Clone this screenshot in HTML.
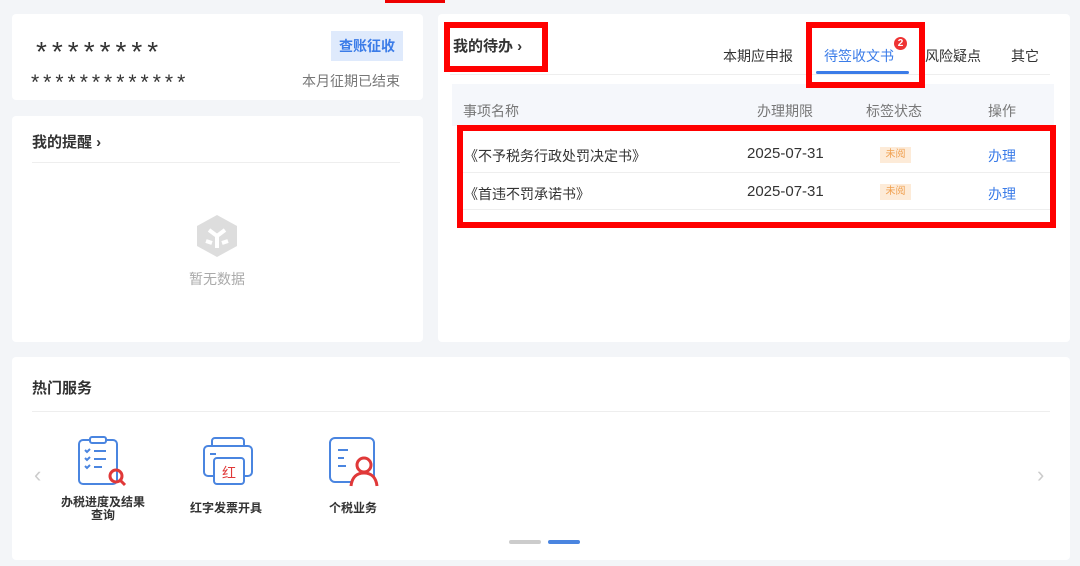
<!DOCTYPE html><html><head><meta charset="utf-8"><style>
*{margin:0;padding:0;box-sizing:border-box}
body{width:1080px;height:566px;background:#f3f5f8;font-family:"Liberation Sans","Noto Sans CJK SC",sans-serif;position:relative;overflow:hidden;color:#333}
.a{position:absolute}
.card{position:absolute;background:#fff;border-radius:4px}
.rb{position:absolute;border:6px solid #f00}
.t{font-size:14px;white-space:nowrap}
</style></head><body>
<div class="a" style="left:385px;top:0;width:60px;height:3px;background:#e00"></div>
<div class="card" style="left:12px;top:14px;width:411px;height:86px"></div>
<div class="a t" style="left:36px;top:36px;font-size:28px;letter-spacing:5px">********</div>
<div class="a t" style="left:31px;top:71px;font-size:21px;letter-spacing:4px">*************</div>
<div class="a" style="left:331px;top:31px;width:72px;height:30px;background:#dfeafc;color:#3b7ce8;font-weight:bold;font-size:14px;text-align:center;line-height:30px">查账征收</div>
<div class="a t" style="left:302px;top:71px;color:#777">本月征期已结束</div>

<div class="card" style="left:12px;top:116px;width:411px;height:226px"></div>
<div class="a t" style="left:32px;top:131px;font-weight:bold;font-size:15px">我的提醒 ›</div>
<div class="a" style="left:32px;top:162px;width:368px;height:1px;background:#eee"></div>
<svg class="a" style="left:194px;top:213px" width="46" height="46" viewBox="0 0 46 46"><path d="M23 2 L43 13 V33 L23 44 L3 33 V13Z" fill="#ddd"/><path d="M15 17l8 6 8-6M23 23v12M12 28l6 2M34 28l-6 2" stroke="#fff" stroke-width="4" fill="none"/></svg>
<div class="a t" style="left:189px;top:269px;color:#aaa">暂无数据</div>

<div class="card" style="left:438px;top:14px;width:632px;height:328px"></div>
<div class="a t" style="left:453px;top:35px;font-weight:bold;font-size:15px">我的待办 ›</div>
<div class="a" style="left:450px;top:74px;width:600px;height:1px;background:#eee"></div>
<div class="a t" style="left:723px;top:46px">本期应申报</div>
<div class="a t" style="left:824px;top:46px;color:#3b7ce8">待签收文书</div>
<div class="a" style="left:894px;top:37px;width:13px;height:13px;border-radius:50%;background:#e33;color:#fff;font-size:10px;text-align:center;line-height:13px;font-weight:bold">2</div>
<div class="a t" style="left:925px;top:46px">风险疑点</div>
<div class="a t" style="left:1011px;top:46px">其它</div>
<div class="a" style="left:816px;top:71px;width:93px;height:3px;background:#3b7ce8;border-radius:2px"></div>
<div class="a" style="left:452px;top:84px;width:602px;height:42px;background:#f5f7fb"></div>
<div class="a t" style="left:463px;top:101px;color:#777">事项名称</div>
<div class="a t" style="left:757px;top:101px;color:#777">办理期限</div>
<div class="a t" style="left:866px;top:101px;color:#777">标签状态</div>
<div class="a t" style="left:988px;top:101px;color:#777">操作</div>
<div class="a" style="left:462px;top:172px;width:588px;height:1px;background:#eee"></div>
<div class="a" style="left:462px;top:209px;width:588px;height:1px;background:#eee"></div>
<div class="a t" style="left:464px;top:146px">《不予税务行政处罚决定书》</div>
<div class="a t" style="left:747px;top:145px;font-size:15px">2025-07-31</div>
<div class="a" style="left:880px;top:147px;width:31px;height:16px;background:#fdebd8;color:#f0a050;font-size:10px;text-align:center;line-height:16px">未阅</div>
<div class="a t" style="left:988px;top:146px;color:#3b7ce8">办理</div>
<div class="a t" style="left:464px;top:184px">《首违不罚承诺书》</div>
<div class="a t" style="left:747px;top:183px;font-size:15px">2025-07-31</div>
<div class="a" style="left:880px;top:184px;width:31px;height:16px;background:#fdebd8;color:#f0a050;font-size:10px;text-align:center;line-height:16px">未阅</div>
<div class="a t" style="left:988px;top:184px;color:#3b7ce8">办理</div>

<div class="rb" style="left:444px;top:22px;width:104px;height:50px"></div>
<div class="rb" style="left:806px;top:22px;width:119px;height:66px"></div>
<div class="rb" style="left:457px;top:125px;width:599px;height:103px"></div>

<div class="card" style="left:12px;top:357px;width:1058px;height:203px"></div>
<div class="a t" style="left:32px;top:377px;font-weight:bold;font-size:15px">热门服务</div>
<div class="a" style="left:32px;top:411px;width:1018px;height:1px;background:#eee"></div>
<div class="a" style="left:34px;top:462px;font-size:22px;color:#ccc">‹</div>
<div class="a" style="left:1037px;top:462px;font-size:22px;color:#ccc">›</div>
<svg class="a" style="left:76px;top:436px" width="56" height="52" viewBox="0 0 56 52"><rect x="3" y="4" width="38" height="44" rx="4" fill="none" stroke="#4a85e0" stroke-width="2"/><rect x="14" y="1" width="16" height="6" rx="2" fill="#fff" stroke="#4a85e0" stroke-width="2"/><path d="M9 14l2 2 3-3M9 22l2 2 3-3M9 30l2 2 3-3M18 15h12M18 23h12M18 31h8" stroke="#4a85e0" stroke-width="2" fill="none"/><circle cx="40" cy="40" r="6" fill="none" stroke="#e03838" stroke-width="3"/><path d="M44 44l5 5" stroke="#e03838" stroke-width="3"/></svg>
<div class="a" style="left:56px;top:496px;width:94px;text-align:center;font-size:12px;font-weight:bold;line-height:13px">办税进度及结果查询</div>
<svg class="a" style="left:202px;top:436px" width="54" height="52" viewBox="0 0 54 52"><rect x="10" y="2" width="32" height="10" rx="3" fill="none" stroke="#4a85e0" stroke-width="2"/><rect x="2" y="10" width="48" height="30" rx="4" fill="#fff" stroke="#4a85e0" stroke-width="2"/><path d="M8 18h6" stroke="#4a85e0" stroke-width="2"/><rect x="12" y="22" width="30" height="26" rx="3" fill="#fff" stroke="#4a85e0" stroke-width="2"/><text x="27" y="42" font-size="14" fill="#e03838" text-anchor="middle" font-family="Noto Sans CJK SC">红</text></svg>
<div class="a t" style="left:190px;top:499px;font-size:12px;font-weight:bold">红字发票开具</div>
<svg class="a" style="left:328px;top:436px" width="54" height="52" viewBox="0 0 54 52"><rect x="2" y="2" width="44" height="44" rx="5" fill="none" stroke="#4a85e0" stroke-width="2"/><path d="M10 14h10M10 22h6M10 30h8" stroke="#4a85e0" stroke-width="2"/><circle cx="36" cy="29" r="7" fill="#fff" stroke="#e03838" stroke-width="3"/><path d="M23 50c1-9 6-13 13-13s12 4 13 13" fill="#fff" stroke="#e03838" stroke-width="3"/></svg>
<div class="a t" style="left:329px;top:499px;font-size:12px;font-weight:bold">个税业务</div>
<div class="a" style="left:509px;top:540px;width:32px;height:4px;background:#ccc;border-radius:2px"></div>
<div class="a" style="left:548px;top:540px;width:32px;height:4px;background:#4a85e0;border-radius:2px"></div>
</body></html>
